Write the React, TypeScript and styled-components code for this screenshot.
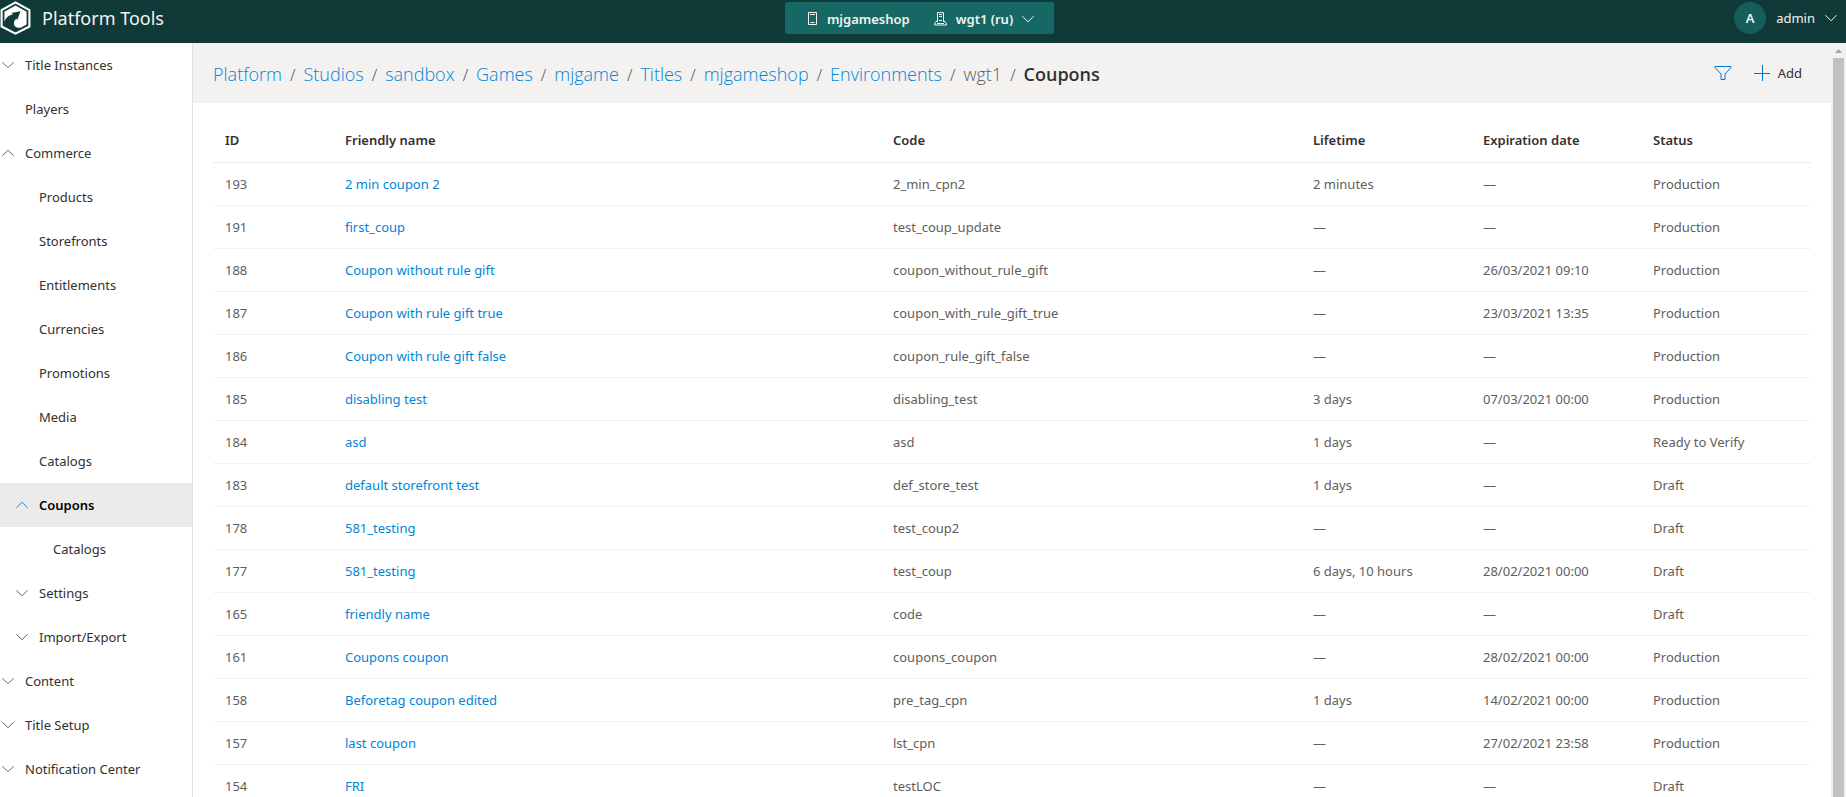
import React from "react";
import styled, { createGlobalStyle, css } from "styled-components";

const GlobalStyle = createGlobalStyle`
  *, *::before, *::after { box-sizing: border-box; }
  body {
    margin: 0;
    background: #ffffff;
    color: #323130;
    font-family: "Segoe UI", "Noto Sans", "Open Sans", sans-serif;
    font-size: 13px;
    line-height: 20px;
  }
  a { text-decoration: none; }
  button { font: inherit; color: inherit; background: none; border: 0; padding: 0; cursor: pointer; }
`;

const Page = styled.div`
  display: flex;
  flex-direction: column;
  height: 100vh;
  overflow: hidden;
`;

const Header = styled.header`
  display: grid;
  grid-template-columns: 1fr auto 1fr;
  align-items: start;
  flex: none;
  height: 43px;
  padding-right: 7px;
  background: #103a38;
  color: #f3f2f1;
`;

const Brand = styled.a`
  display: flex;
  align-items: center;
  gap: 11px;
  height: 36px;
  color: #f3f2f1;
  font-size: 18px;
`;

const EnvironmentButton = styled.button`
  display: flex;
  align-items: center;
  height: 32px;
  margin-top: 2px;
  padding: 2px 20px 0 22px;
  border-radius: 2px;
  background: #166864;
  font-weight: 600;
`;

const EnvironmentPart = styled.span`
  display: flex;
  align-items: center;
  gap: 9px;
  & + & { margin-left: 24px; }
`;

const UserButton = styled.button`
  display: flex;
  align-items: center;
  justify-self: end;
  gap: 10px;
  height: 36px;
  padding-right: 2px;
`;

const Avatar = styled.span`
  width: 32px;
  height: 32px;
  border-radius: 50%;
  background: #155e5a;
  font-weight: 600;
  line-height: 32px;
  text-align: center;
`;

const Body = styled.div`
  display: flex;
  flex: 1;
  min-height: 0;
`;

const Sidebar = styled.nav`
  flex: none;
  width: 193px;
  overflow: hidden;
  border-right: 1px solid #e1dfdd;
`;

const NavItem = styled.a<{ $level: number; $active?: boolean }>`
  display: flex;
  align-items: center;
  gap: 9px;
  height: 44px;
  padding-left: ${({ $level }) => $level * 14}px;
  color: #323130;
  ${({ $active }) =>
    $active &&
    css`
      background: #edebe9;
      color: #000000;
      font-weight: 600;
      svg { color: #0a8fd8; }
    `}
`;

const ChevronSlot = styled.span`
  display: flex;
  justify-content: center;
  width: 16px;
  color: #605e5c;
`;

const Scroller = styled.main`
  flex: 1;
  min-width: 0;
  overflow-y: auto;
  scrollbar-width: none;
`;

const TitleBar = styled.div`
  display: flex;
  align-items: center;
  justify-content: space-between;
  height: 60px;
  padding: 0 29px 0 20px;
  background: #f3f2f1;
`;

const Breadcrumbs = styled.ol`
  display: flex;
  margin: 0;
  padding: 2px 0 0;
  list-style: none;
  font-family: "Segoe UI", "Open Sans", sans-serif;
  font-size: 18px;
  line-height: 28px;
`;

const Crumb = styled.li`
  color: #605e5c;
  font-weight: 350;
  a { color: #0086d6; }
  strong { color: #323130; font-weight: 600; }
  & + &::before {
    content: "/";
    margin: 0 8px;
    color: #484644;
    font-size: 16px;
  }
`;

const Actions = styled.div`
  display: flex;
  align-items: center;
  gap: 22px;
`;

const ActionButton = styled.button`
  display: flex;
  align-items: center;
  gap: 8px;
  svg { color: #0078c8; }
`;

const TableArea = styled.div`
  padding: 16px 20px;
`;

const Table = styled.table`
  width: 100%;
  table-layout: fixed;
  border-collapse: separate;
  border-spacing: 0;
`;

const HeadCell = styled.th<{ $width?: string }>`
  width: ${({ $width }) => $width ?? "auto"};
  height: 44px;
  padding: 0 12px 2px;
  border-bottom: 1px solid #edebe9;
  font-weight: 600;
  text-align: left;
`;

const Cell = styled.td`
  height: 43px;
  padding: 0 12px;
  border-bottom: 1px solid #f3f2f1;
  color: #605e5c;
  a { color: #0086d6; }
`;

const ScrollRail = styled.div`
  display: flex;
  flex-direction: column;
  align-items: center;
  flex: none;
  width: 15px;
  padding: 4px 2px 0;
  background: #f1f1f1;
`;

const ScrollThumb = styled.div`
  flex: 1;
  width: 11px;
  margin-top: 4px;
  background: #c1c1c1;
`;

const Chevron = ({ up = false }: { up?: boolean }) => (
  <svg width="12" height="8" viewBox="0 0 12 8" fill="none" stroke="currentColor" aria-hidden="true">
    <path d={up ? "M.4 6.8 6 1.2l5.6 5.6" : "M.4 1.2 6 6.8l5.6-5.6"} />
  </svg>
);

const Logo = () => (
  <svg width="31" height="36" viewBox="0 0 31 36" aria-hidden="true">
    <path d="M15.5 2.4 29.4 10v16.5l-13.9 7.1L1.6 26.5V10Z" fill="none" stroke="#fff" strokeWidth="2.1" />
    <path d="M15.5 5.6 26.6 11.8v12.6l-6 3.3c-4.5.4-7.6-2.2-6.5-5.8.5-1.5 1.4-2.5 2.4-3.3l.7 1.7 3.3-9-9.3 1.8 2 1.2c-4.5.9-7.3 3.3-8.8 7.2V11.8Z" fill="#fff" />
  </svg>
);

const TitleIcon = () => (
  <svg width="11" height="14" viewBox="0 0 11 14" fill="none" stroke="currentColor" aria-hidden="true">
    <path d="M1.5.5h8v12h-8ZM3 2.5h5M3.5 10.5h4" />
  </svg>
);

const EnvironmentIcon = () => (
  <svg width="13" height="14" viewBox="0 0 13 14" fill="none" stroke="currentColor" aria-hidden="true">
    <path d="M3.5 10V.5h6V10M5 2.5h3M5 4.5h3M5 8.5h3M3.5 9.5H2L.5 12v1h12v-1L11 9.5H9.5M3 11.5h7" />
  </svg>
);

const FilterIcon = () => (
  <svg width="18" height="16" viewBox="0 0 18 16" fill="none" stroke="currentColor" aria-hidden="true">
    <path d="M1 1.5h16v1L11 9v5.5H7V9L1 2.5Z" />
  </svg>
);

const PlusIcon = () => (
  <svg width="16" height="16" viewBox="0 0 16 16" fill="none" stroke="currentColor" aria-hidden="true">
    <path d="M8.5 0v16M0 8.5h16" />
  </svg>
);

type NavEntry = { label: string; level: number; chevron?: "up" | "down"; active?: boolean };

const navigation: NavEntry[] = [
  { label: "Title Instances", level: 0, chevron: "down" },
  { label: "Players", level: 0 },
  { label: "Commerce", level: 0, chevron: "up" },
  { label: "Products", level: 1 },
  { label: "Storefronts", level: 1 },
  { label: "Entitlements", level: 1 },
  { label: "Currencies", level: 1 },
  { label: "Promotions", level: 1 },
  { label: "Media", level: 1 },
  { label: "Catalogs", level: 1 },
  { label: "Coupons", level: 1, chevron: "up", active: true },
  { label: "Catalogs", level: 2 },
  { label: "Settings", level: 1, chevron: "down" },
  { label: "Import/Export", level: 1, chevron: "down" },
  { label: "Content", level: 0, chevron: "down" },
  { label: "Title Setup", level: 0, chevron: "down" },
  { label: "Notification Center", level: 0, chevron: "down" },
];

const crumbs = ["Platform", "Studios", "sandbox", "Games", "mjgame", "Titles", "mjgameshop", "Environments"];

const columns = [
  { label: "ID", width: "120px" },
  { label: "Friendly name" },
  { label: "Code", width: "420px" },
  { label: "Lifetime", width: "170px" },
  { label: "Expiration date", width: "170px" },
  { label: "Status", width: "170px" },
];

const coupons = [
  ["193", "2 min coupon 2", "2_min_cpn2", "2 minutes", "—", "Production"],
  ["191", "first_coup", "test_coup_update", "—", "—", "Production"],
  ["188", "Coupon without rule gift", "coupon_without_rule_gift", "—", "26/03/2021 09:10", "Production"],
  ["187", "Coupon with rule gift true", "coupon_with_rule_gift_true", "—", "23/03/2021 13:35", "Production"],
  ["186", "Coupon with rule gift false", "coupon_rule_gift_false", "—", "—", "Production"],
  ["185", "disabling test", "disabling_test", "3 days", "07/03/2021 00:00", "Production"],
  ["184", "asd", "asd", "1 days", "—", "Ready to Verify"],
  ["183", "default storefront test", "def_store_test", "1 days", "—", "Draft"],
  ["178", "581_testing", "test_coup2", "—", "—", "Draft"],
  ["177", "581_testing", "test_coup", "6 days, 10 hours", "28/02/2021 00:00", "Draft"],
  ["165", "friendly name", "code", "—", "—", "Draft"],
  ["161", "Coupons coupon", "coupons_coupon", "—", "28/02/2021 00:00", "Production"],
  ["158", "Beforetag coupon edited", "pre_tag_cpn", "1 days", "14/02/2021 00:00", "Production"],
  ["157", "last coupon", "lst_cpn", "—", "27/02/2021 23:58", "Production"],
  ["154", "FRI", "testLOC", "—", "—", "Draft"],
];

export default function App() {
  return (
    <Page>
      <GlobalStyle />
      <Header>
        <Brand href="#">
          <Logo />
          Platform Tools
        </Brand>
        <EnvironmentButton type="button">
          <EnvironmentPart>
            <TitleIcon />
            mjgameshop
          </EnvironmentPart>
          <EnvironmentPart>
            <EnvironmentIcon />
            wgt1 (ru)
            <Chevron />
          </EnvironmentPart>
        </EnvironmentButton>
        <UserButton type="button">
          <Avatar>A</Avatar>
          admin
          <Chevron />
        </UserButton>
      </Header>
      <Body>
        <Sidebar aria-label="Main">
          {navigation.map((item, index) => (
            <NavItem key={index} href="#" $level={item.level} $active={item.active}>
              <ChevronSlot>{item.chevron && <Chevron up={item.chevron === "up"} />}</ChevronSlot>
              {item.label}
            </NavItem>
          ))}
        </Sidebar>
        <Scroller>
          <TitleBar>
            <Breadcrumbs>
              {crumbs.map((label) => (
                <Crumb key={label}>
                  <a href="#">{label}</a>
                </Crumb>
              ))}
              <Crumb>wgt1</Crumb>
              <Crumb>
                <strong>Coupons</strong>
              </Crumb>
            </Breadcrumbs>
            <Actions>
              <ActionButton type="button" aria-label="Filter">
                <FilterIcon />
              </ActionButton>
              <ActionButton type="button">
                <PlusIcon />
                Add
              </ActionButton>
            </Actions>
          </TitleBar>
          <TableArea>
            <Table>
              <thead>
                <tr>
                  {columns.map(({ label, width }) => (
                    <HeadCell key={label} scope="col" $width={width}>
                      {label}
                    </HeadCell>
                  ))}
                </tr>
              </thead>
              <tbody>
                {coupons.map(([id, name, ...details]) => (
                  <tr key={id}>
                    <Cell>{id}</Cell>
                    <Cell>
                      <a href="#">{name}</a>
                    </Cell>
                    {details.map((detail, index) => (
                      <Cell key={index}>{detail}</Cell>
                    ))}
                  </tr>
                ))}
              </tbody>
            </Table>
          </TableArea>
        </Scroller>
        <ScrollRail aria-hidden="true">
          <svg width="7" height="7" viewBox="0 0 7 7">
            <path d="M0 6 3.5 2 7 6Z" fill="#a3a3a3" />
          </svg>
          <ScrollThumb />
        </ScrollRail>
      </Body>
    </Page>
  );
}
